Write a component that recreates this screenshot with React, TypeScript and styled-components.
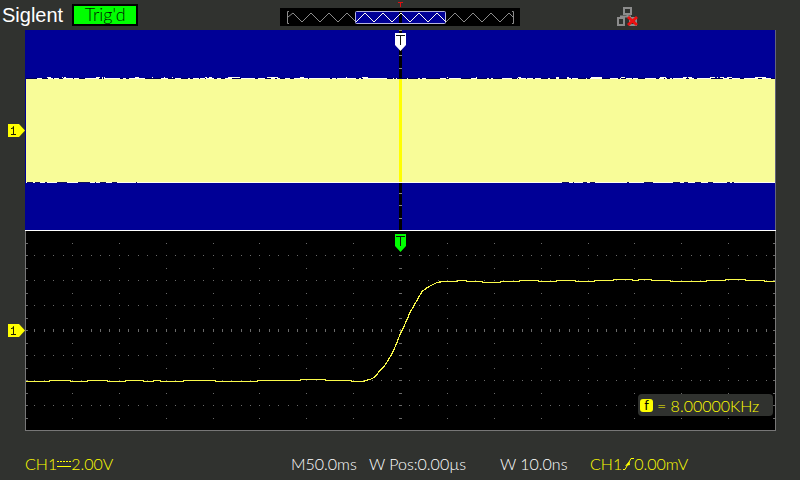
import React from "react";
import styled, { createGlobalStyle } from "styled-components";

const colors = {
  panel: "#30322f",
  yellow: "#ffff00",
  trace: "#fafa4a",
  band: "#f8fc98",
  blue: "#000096",
  green: "#00ff00",
  text: "#ffffff",
};

const GlobalStyle = createGlobalStyle`
  * { box-sizing: border-box; }
  body {
    margin: 0;
    background: ${colors.panel};
    color: ${colors.text};
    font-family: Lato, "Liberation Sans", sans-serif;
    font-weight: 300;
    font-size: 16px;
  }
`;

const Instrument = styled.div`
  display: flex;
  flex-direction: column;
  min-height: 100vh;
`;

const Header = styled.header`
  display: grid;
  grid-template-columns: 1fr 240px 1fr;
  height: 30px;
`;

const Brand = styled.div`
  display: flex;
  align-items: center;
  gap: 9px;
  padding-left: 2px;
`;

const BrandName = styled.h1`
  margin: 0;
  font: 400 20px/28px "Liberation Sans", Arial, sans-serif;
  color: #fff;
`;

const TriggerStatus = styled.div`
  width: 66px;
  height: 22px;
  border: 2px solid #000;
  background: ${colors.green};
  color: #001800;
  font-size: 18px;
  line-height: 17px;
  text-align: center;
`;

const HeaderSvg = styled.svg`
  display: block;
`;

const Network = styled.div`
  padding: 6px 0 0 97px;
`;

const Screen = styled.main`
  display: grid;
  grid-template-columns: 25px minmax(0, 1fr) 24px;
  grid-template-rows: 200px 201px;
`;

const Gutter = styled.div`
  display: flex;
  align-items: center;
  justify-content: flex-end;
`;

const Plot = styled.section`
  position: relative;
  min-width: 0;
`;

const PlotSvg = styled.svg`
  display: block;
  width: 100%;
  height: 100%;
`;

const Position = styled.div<{ $top: number }>`
  position: absolute;
  top: ${(p) => p.$top}px;
  left: 0;
  right: 0;
  display: flex;
  justify-content: center;
`;

const Counter = styled.div`
  position: absolute;
  right: 3px;
  bottom: 15px;
  display: flex;
  align-items: center;
  gap: 4px;
  width: 135px;
  height: 22px;
  padding-left: 2px;
  border-radius: 4px;
  background: ${colors.panel};
  color: ${colors.yellow};
  white-space: nowrap;
`;

const CounterBadge = styled.span`
  width: 13px;
  height: 13px;
  border-radius: 3px;
  background: ${colors.yellow};
  color: #000;
  font-size: 13px;
  font-weight: 400;
  line-height: 12px;
  text-align: center;
`;

const Footer = styled.footer`
  display: grid;
  grid-template-columns: 266fr 78fr 131fr 90fr 210fr;
  align-items: center;
  flex: 1;
  padding: 16px 0 0 25px;
`;

const Reading = styled.span<{ $channel?: boolean }>`
  display: flex;
  align-items: center;
  color: ${(p) => (p.$channel ? colors.yellow : colors.text)};
  line-height: 20px;
  white-space: nowrap;
`;

const zigzag = (from: number, to: number, start: "up" | "down") => {
  const pts: string[] = [];
  let low = start === "up";
  for (let x = from; x <= to; x += 9) {
    pts.push(`${x},${low ? 22 : 13}`);
    low = !low;
  }
  return pts.join(" ");
};

function MemoryOverview() {
  return (
    <HeaderSvg width="240" height="30" fill="none" role="img" aria-label="Memory position">
      <rect y="8" width="240" height="18" fill="#000" />
      <path d="M9 11.500H7.500V23.500H9M232 11.500H233.500V23.500H232" stroke="#8c8c8c" />
      <polyline points={`8,17 ${zigzag(13, 76, "down")}`} stroke="#8c8c8c" />
      <polyline points={`${zigzag(166, 229, "up")} 233,17`} stroke="#8c8c8c" />
      <rect x="75.5" y="11.500" width="90" height="12" rx="1" fill={colors.blue} stroke="#b4b4e0" />
      <path d="M120.500 12V23" stroke="#000" strokeWidth="3" />
      <polyline points={zigzag(76, 166, "up")} stroke="#fffff0" />
      <path d="M118 2.500H123M120.500 3V7" stroke="#e01010" />
    </HeaderSvg>
  );
}

function NetworkOffline() {
  return (
    <HeaderSvg width="22" height="22" fill="none" role="img" aria-label="Network disconnected">
      <path d="M7 2H14V8H7ZM1 12H7V19H1ZM13 12H19V19H13ZM10.500 8V10.500M4 12V10.500H14" stroke="#8c8c8c" strokeWidth="2" />
      <path d="M11 11L20 19M20 11L11 19" stroke="#ee1010" strokeWidth="3" />
    </HeaderSvg>
  );
}

function ChannelTag() {
  return (
    <svg width="17" height="13" role="img" aria-label="Channel 1 level">
      <path d="M0 0H11L17 6.500L11 13H0Z" fill={colors.yellow} />
      <path d="M3 4.500H4.500L5.500 2.500V10.500M3 10.500H8" fill="none" stroke="#202000" />
    </svg>
  );
}

function TriggerTag({ fill }: { fill: string }) {
  return (
    <svg width="11" height="18" role="img" aria-label="Trigger position">
      <path d="M0 0H11V12L5.500 18L0 12Z" fill={fill} />
      <path d="M1 2.500H10M5.500 2V12" fill="none" stroke="#101010" />
    </svg>
  );
}

const noise = (count: number, seed: number) => {
  const out: { x: number; w: number }[] = [];
  let s = seed;
  for (let i = 0; i < count; i++) {
    s = (s * 1103515245 + 12345) % 2147483648;
    out.push({ x: 2 + (s % 745), w: 1 + (Math.floor(s / 1000) % 6) });
  }
  return out;
};

function MainWindow() {
  return (
    <PlotSvg viewBox="0 0 751 200" preserveAspectRatio="none" shapeRendering="crispEdges" role="img" aria-label="Main time base">
      <rect width="751" height="200" fill={colors.blue} />
      <rect x="374" width="3" height="200" fill="#000" />
      {Array.from({ length: 16 }, (_, i) => (
        <rect key={i} x="374" y={Math.round(i * 12.5)} width="3" height="1" fill="#888" />
      ))}
      <rect x="1" y="48" width="749" height="1" fill="#000050" />
      <rect x="1" y="49" width="749" height="104" fill={colors.band} />
      <rect x="1" y="152" width="749" height="1" fill="#fffff0" />
      {noise(190, 7).map((n, i) => (
        <rect key={i} x={n.x} y="48" width={n.w} height="1" fill="#fffff0" />
      ))}
      {noise(40, 11).map((n, i) => (
        <rect key={i} x={n.x} y="47" width={n.w} height="1" fill="#fffff0" />
      ))}
      {noise(40, 21).map((n, i) => (
        <rect key={i} x={Math.round(n.x % 2 ? n.x / 6 : 530 + n.x / 4)} y="152" width={n.w} height="1" fill="#10105a" />
      ))}
      <rect x="374" y="49" width="3" height="103" fill={colors.yellow} />
      <rect x="750" width="1" height="200" fill="#62627c" />
    </PlotSvg>
  );
}

const dots: { x: number; y: number; w: number; h: number }[] = [];
for (let row = 1; row <= 8; row++) {
  for (let i = 1; i < 80; i++) {
    const axis = row === 4;
    dots.push({ x: Math.round(i * 9.375), y: row * 25 - (axis ? 1 : 0), w: 1, h: axis ? 3 : 1 });
  }
}
for (let col = 0; col <= 16; col++) {
  for (let j = 1; j < 16; j++) {
    const axis = col === 8;
    const edge = col === 0 || col === 16;
    const x = Math.round(col * 46.875);
    dots.push({ x: col === 16 ? 748 : axis ? x - 1 : x, y: Math.round(j * 12.5), w: axis || edge ? 3 : 1, h: 1 });
  }
}

const lowLevel =
  "1,151 24,151 25,150 45,150 46,151 62,151 63,150 82,150 83,151 100,151 101,150 118,150 119,151 128,151 129,150 135,150 136,151 158,151 159,150 190,150 191,151 232,151 233,150 275,150 276,149 300,149 301,150 326,150 327,151 338,151";
const risingEdge =
  "341,150 345,149 349,147 352,144 355,140 359,136 363,130 366,125 369,119 372,112 375,104 378,98 382,89 385,82 389,75 393,68 397,61 401,58 406,55 412,52 418,51";
const highLevel =
  "432,51 433,50 441,50 442,51 457,51 458,52 475,52 476,51 494,51 495,50 513,50 514,51 531,51 532,50 550,50 551,51 569,51 570,50 588,50 589,49 607,49 608,50 613,50 614,49 626,49 627,50 645,50 646,51 681,51 682,50 700,50 701,49 720,49 721,50 739,50 740,51 750,51";

function ZoomWindow() {
  return (
    <PlotSvg viewBox="0 0 751 201" preserveAspectRatio="none" shapeRendering="crispEdges" role="img" aria-label="Zoomed time base">
      <rect width="751" height="201" fill="#000" />
      {dots.map((d, i) => (
        <rect key={i} x={d.x} y={d.y} width={d.w} height={d.h} fill="#6a6a6a" />
      ))}
      <rect width="1" height="201" fill="#777" />
      <rect x="750" width="1" height="201" fill="#777" />
      <rect y="200" width="751" height="1" fill="#777" />
      <rect width="751" height="1" fill="#fff" />
      <polyline
        points={`${lowLevel} ${risingEdge} ${highLevel}`}
        fill="none"
        stroke={colors.trace}
        strokeWidth="1.2"
        transform="translate(0 .5)"
      />
    </PlotSvg>
  );
}

function DcCoupling() {
  return (
    <svg width="14" height="8" fill="none" aria-label="DC coupling" role="img">
      <path d="M0 1.500H14" stroke={colors.yellow} strokeDasharray="2 1" />
      <path d="M0 6.500H14" stroke={colors.yellow} />
    </svg>
  );
}

function RisingEdge() {
  return (
    <svg width="12" height="14" fill="none" aria-label="Rising edge" role="img">
      <path d="M1 12.500H3L9 1.500H12" stroke={colors.yellow} />
      <path d="M3 9L7.500 4L8 8Z" fill={colors.yellow} />
    </svg>
  );
}

export default function App() {
  return (
    <Instrument>
      <GlobalStyle />
      <Header>
        <Brand>
          <BrandName>Siglent</BrandName>
          <TriggerStatus>Trig'd</TriggerStatus>
        </Brand>
        <MemoryOverview />
        <Network>
          <NetworkOffline />
        </Network>
      </Header>
      <Screen>
        <Gutter><ChannelTag /></Gutter>
        <Plot>
          <MainWindow />
          <Position $top={3}><TriggerTag fill="#fff" /></Position>
        </Plot>
        <span />
        <Gutter><ChannelTag /></Gutter>
        <Plot>
          <ZoomWindow />
          <Position $top={4}><TriggerTag fill={colors.green} /></Position>
          <Counter>
            <CounterBadge>f</CounterBadge>
            <span>= 8.00000KHz</span>
          </Counter>
        </Plot>
      </Screen>
      <Footer>
        <Reading $channel>CH1<DcCoupling />2.00V</Reading>
        <Reading>M50.0ms</Reading>
        <Reading>W Pos:0.00µs</Reading>
        <Reading>W 10.0ns</Reading>
        <Reading $channel>CH1<RisingEdge />0.00mV</Reading>
      </Footer>
    </Instrument>
  );
}
